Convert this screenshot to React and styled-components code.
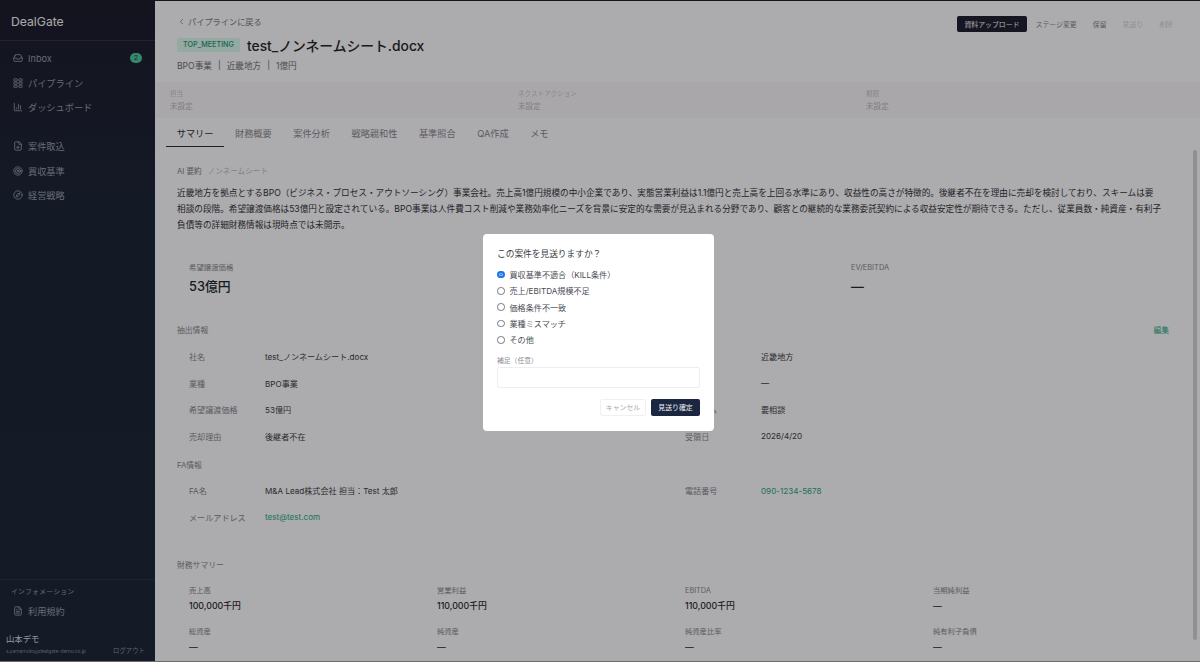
import React from 'react';
import styled, { createGlobalStyle } from 'styled-components';
import { Inbox, ChartColumn, FilePlus, Target, Compass, FileText, ChevronLeft } from 'lucide-react';

const GlobalStyle = createGlobalStyle`
  html, body { margin: 0; padding: 0; height: 100%; overflow: hidden; }
  body { font-family: Inter, "Noto Sans CJK JP", "Noto Sans", sans-serif; color: #2e2e34; }
  * { box-sizing: border-box; }
`;

const Frame = styled.div`
  position: relative;
  display: flex;
  height: 662px;
  overflow: hidden;
  background: #f7f5f8;
`;

const Sidebar = styled.aside`
  width: 155px;
  flex-shrink: 0;
  display: flex;
  flex-direction: column;
  background: linear-gradient(180deg, #1c1d2c 0%, #1e2537 30%, #1f2638 100%);
  color: #969aa8;
`;

const Logo = styled.div`
  height: 41px;
  padding: 14px 11px 0;
  font-size: 12.2px;
  line-height: 16px;
  color: #f4f4f6;
  border-bottom: 1px solid #2d3445;
`;

const NavGroup = styled.nav`
  display: flex;
  flex-direction: column;
  padding: 5px 0 0;
  margin-bottom: 9.5px;
`;

const NavItem = styled.div`
  height: 24.5px;
  display: flex;
  align-items: center;
  gap: 5px;
  padding: 0 13px;
  font-size: 9.2px;
  svg { flex-shrink: 0; }
`;

const Badge = styled.span`
  margin-left: auto;
  width: 12px;
  height: 10px;
  border-radius: 5px;
  background: #4cc39a;
  color: #17382c;
  font-size: 6.5px;
  line-height: 10px;
  text-align: center;
`;

const SideFooter = styled.div`
  margin-top: auto;
  border-top: 1px solid #2d3445;
`;

const InfoLabel = styled.div`
  padding: 7px 11px 0;
  font-size: 6.8px;
  line-height: 10px;
  letter-spacing: 0.3px;
  color: #9397a6;
`;

const TermsItem = styled(NavItem)`
  height: 20px;
  margin-top: 4px;
`;

const Account = styled.div`
  padding: 12px 10px 5px 6px;
`;

const AccountName = styled.div`
  font-size: 8.4px;
  line-height: 12px;
  color: #d6d8df;
`;

const AccountRow = styled.div`
  display: flex;
  justify-content: space-between;
  align-items: center;
  font-size: 6.4px;
  line-height: 12px;
  color: #8b8f9e;
`;

const MaskedMail = styled.span`
  font-size: 5.2px;
  letter-spacing: -0.2px;
  color: #7d8292;
  filter: blur(0.4px);
`;

const Main = styled.main`
  position: relative;
  flex: 1;
  min-width: 0;
  overflow: hidden;
`;

const Header = styled.header`
  height: 82px;
  padding: 15px 19px 0 22px;
  display: flex;
  justify-content: space-between;
  align-items: flex-start;
  background: #ffffff0a;
`;

const BackLink = styled.div`
  display: flex;
  align-items: center;
  gap: 2px;
  height: 12px;
  font-size: 8.2px;
  color: #77767e;
`;

const TitleRow = styled.div`
  display: flex;
  align-items: center;
  gap: 7px;
  height: 24px;
  margin-top: 6px;
`;

const Stage = styled.span`
  height: 14px;
  width: 63px;
  border-radius: 2px;
  background: #d3f3e8;
  color: #2f8f74;
  font-size: 7.2px;
  font-weight: 500;
  line-height: 14px;
  text-align: center;
`;

const Title = styled.h1`
  margin: 0;
  font-size: 13.8px;
  font-weight: 500;
  color: #26262c;
`;

const SubLine = styled.div`
  display: flex;
  align-items: center;
  gap: 6px;
  height: 12px;
  margin-top: 2px;
  font-size: 8.6px;
  color: #6f6e76;
`;

const Actions = styled.div`
  display: flex;
  align-items: center;
  margin-top: 1px;
`;

const ActionButton = styled.button`
  height: 16px;
  padding: 0 ${p => (p.$primary ? '7px' : '8px')};
  margin: 0 ${p => (p.$primary ? '1px' : '0')} 0 0;
  border: 0;
  border-radius: 2px;
  font-family: inherit;
  font-size: 6.9px;
  background: ${p => (p.$primary ? '#1f2030' : 'transparent')};
  color: ${p => (p.$primary ? '#f4f4f6' : p.$muted ? '#cfcdd2' : '#85848b')};
  filter: ${p => (p.$muted ? 'blur(0.4px)' : 'none')};
`;

const Strip = styled.section`
  display: grid;
  grid-template-columns: repeat(3, 348px);
  height: 36px;
  padding: 7px 15px 0;
  background: #f2f0f3;
`;

const StripLabel = styled.div`
  font-size: 6.6px;
  line-height: 10px;
  color: #c2c0c5;
  filter: blur(0.3px);
`;

const StripValue = styled.div`
  margin-top: 3px;
  font-size: 7.6px;
  line-height: 10px;
  color: #b4b2b8;
  filter: blur(0.3px);
`;

const Tabs = styled.div`
  display: flex;
  height: 29px;
  padding-left: 11px;
`;

const Tab = styled.div`
  padding: 0 10.75px;
  font-size: 9.2px;
  line-height: 31px;
  color: ${p => (p.$active ? '#2e2e34' : '#85848c')};
  border-bottom: ${p => (p.$active ? '1.5px solid #2e2e34' : '0')};
`;

const Content = styled.div`
  padding: 19px 31px 0 22px;
`;

const SummaryHead = styled.div`
  display: flex;
  gap: 6px;
  height: 12px;
  font-size: 7.6px;
  line-height: 12px;
  color: #7b7a82;
`;

const SummaryHint = styled.span`
  color: #bbb9c0;
`;

const SummaryText = styled.p`
  margin: 7px 0 0;
  font-size: 8.65px;
  line-height: 16px;
  white-space: nowrap;
  color: #33333a;
`;

const Metrics = styled.div`
  display: grid;
  grid-template-columns: repeat(3, 331px);
  margin-top: 29px;
  padding-left: 12px;
`;

const MetricLabel = styled.div`
  height: 12px;
  font-size: 7.4px;
  line-height: 12px;
  color: #85848c;
`;

const MetricValue = styled.div`
  height: 20px;
  margin-top: 3px;
  font-size: 12.8px;
  line-height: 20px;
  font-weight: 500;
  color: #26262c;
`;

const SectionHead = styled.div`
  display: flex;
  justify-content: space-between;
  height: 12px;
  margin-top: ${p => p.$top}px;
  font-size: 7.8px;
  line-height: 12px;
  color: #85848c;
`;

const EditLink = styled.span`
  color: #2aa67e;
`;

const InfoGrid = styled.div`
  display: grid;
  grid-template-columns: 496px 1fr;
  margin-top: ${p => p.$top}px;
  padding-left: 12px;
`;

const InfoRow = styled.div`
  display: grid;
  grid-template-columns: 76px 1fr;
  align-items: center;
  height: 26.4px;
  font-size: 8.1px;
`;

const InfoKey = styled.span`
  color: #85848c;
`;

const InfoValue = styled.span`
  color: ${p => (p.$link ? '#2aa67e' : '#3d3d44')};
`;

const FinanceGrid = styled.div`
  display: grid;
  grid-template-columns: repeat(4, 248px);
  row-gap: 14px;
  margin-top: 14px;
  padding-left: 12px;
`;

const FinanceLabel = styled.div`
  height: 12px;
  font-size: 7.3px;
  line-height: 12px;
  color: #85848c;
`;

const FinanceValue = styled.div`
  height: 13px;
  margin-top: 2px;
  font-size: 8.8px;
  line-height: 13px;
  font-weight: 500;
  color: #2a2a30;
`;

const ScrollThumb = styled.div`
  position: absolute;
  top: 150px;
  right: 3px;
  width: 4px;
  height: 490px;
  border-radius: 2px;
  background: #cfcdd1;
`;

const Overlay = styled.div`
  position: absolute;
  inset: 0;
  display: flex;
  align-items: center;
  justify-content: center;
  padding: 2px 3px 0 0;
  background: rgba(0, 0, 0, 0.3);
  border-top: 1.5px solid #14141c;
  border-bottom: 1px solid #6c6b70;
`;

const Modal = styled.form`
  width: 231px;
  height: 197px;
  padding: 14px 14px 0;
  border-radius: 4px;
  background: #fff;
`;

const ModalTitle = styled.div`
  font-size: 8.7px;
  line-height: 12px;
  color: #3a3a42;
`;

const RadioList = styled.div`
  display: flex;
  flex-direction: column;
  margin-top: 7px;
`;

const RadioRow = styled.label`
  display: flex;
  align-items: center;
  gap: 5px;
  height: 16.3px;
  font-size: 8.1px;
  color: #4a4a52;
`;

const RadioDot = styled.span`
  width: 7.5px;
  height: 7.5px;
  border-radius: 50%;
  flex-shrink: 0;
  border: ${p => (p.$checked ? '2px solid #1a73e8' : '0.8px solid #77777f')};
  background: ${p => (p.$checked ? '#1a73e8' : '#fff')};
  box-shadow: ${p => (p.$checked ? 'inset 0 0 0 0.6px #fff' : 'none')};
`;

const NoteLabel = styled.div`
  margin-top: 8px;
  font-size: 6.8px;
  line-height: 10px;
  color: #8c8c94;
`;

const NoteInput = styled.div`
  width: 203px;
  height: 21px;
  margin-top: 1px;
  border: 1px solid #eeeef1;
  border-radius: 2px;
`;

const ModalActions = styled.div`
  display: flex;
  justify-content: flex-end;
  gap: 5px;
  margin-top: 11px;
`;

const ModalButton = styled.button`
  width: ${p => (p.$primary ? '49px' : '46px')};
  height: 17px;
  padding: 0;
  border: ${p => (p.$primary ? '0' : '1px solid #f0f0f3')};
  border-radius: 2px;
  font-family: inherit;
  font-size: 6.9px;
  background: ${p => (p.$primary ? '#1b2740' : '#fff')};
  color: ${p => (p.$primary ? '#eef0f4' : '#a8a8b0')};
`;

const PipelineIcon = () => (
  <svg width="10" height="10" viewBox="0 0 12 12" fill="none" stroke="currentColor" strokeWidth="1">
    <rect x="1" y="1" width="4" height="2.6" rx="0.5" />
    <rect x="7" y="1" width="4" height="2.6" rx="0.5" />
    <rect x="1" y="4.8" width="4" height="2.6" rx="0.5" />
    <rect x="7" y="4.8" width="4" height="2.6" rx="0.5" />
    <rect x="1" y="8.6" width="4" height="2.6" rx="0.5" />
    <rect x="7" y="8.6" width="4" height="2.6" rx="0.5" />
  </svg>
);

const mainNav = [
  { icon: <Inbox size={10} />, label: 'Inbox', badge: '2' },
  { icon: <PipelineIcon />, label: 'パイプライン' },
  { icon: <ChartColumn size={10} />, label: 'ダッシュボード' },
];

const toolNav = [
  { icon: <FilePlus size={10} />, label: '案件取込' },
  { icon: <Target size={10} />, label: '買収基準' },
  { icon: <Compass size={10} />, label: '経営戦略' },
];

const tabs = ['サマリー', '財務概要', '案件分析', '戦略親和性', '基準照合', 'QA作成', 'メモ'];

const extracted = [
  ['社名', 'test_ノンネームシート.docx'],
  ['所在地', '近畿地方'],
  ['業種', 'BPO事業'],
  ['設立年', '—'],
  ['希望譲渡価格', '53億円'],
  ['スキーム', '要相談'],
  ['売却理由', '後継者不在'],
  ['受領日', '2026/4/20'],
];

const finance = [
  ['売上高', '100,000千円'],
  ['営業利益', '110,000千円'],
  ['EBITDA', '110,000千円'],
  ['当期純利益', '—'],
  ['総資産', '—'],
  ['純資産', '—'],
  ['純資産比率', '—'],
  ['純有利子負債', '—'],
];

const reasons = ['買収基準不適合（KILL条件）', '売上/EBITDA規模不足', '価格条件不一致', '業種ミスマッチ', 'その他'];

export default function App() {
  return (
    <Frame>
      <GlobalStyle />
      <Sidebar>
        <Logo>DealGate</Logo>
        <NavGroup>
          {mainNav.map(item => (
            <NavItem key={item.label}>
              {item.icon}
              {item.label}
              {item.badge && <Badge>{item.badge}</Badge>}
            </NavItem>
          ))}
        </NavGroup>
        <NavGroup>
          {toolNav.map(item => (
            <NavItem key={item.label}>
              {item.icon}
              {item.label}
            </NavItem>
          ))}
        </NavGroup>
        <SideFooter>
          <InfoLabel>インフォメーション</InfoLabel>
          <TermsItem>
            <FileText size={10} />
            利用規約
          </TermsItem>
          <Account>
            <AccountName>山本デモ</AccountName>
            <AccountRow>
              <MaskedMail>s.yamamoto@dealgate-demo.co.jp</MaskedMail>
              ログアウト
            </AccountRow>
          </Account>
        </SideFooter>
      </Sidebar>

      <Main>
        <Header>
          <div>
            <BackLink>
              <ChevronLeft size={9} />
              パイプラインに戻る
            </BackLink>
            <TitleRow>
              <Stage>TOP_MEETING</Stage>
              <Title>test_ノンネームシート.docx</Title>
            </TitleRow>
            <SubLine>
              <span>BPO事業</span>|<span>近畿地方</span>|<span>1億円</span>
            </SubLine>
          </div>
          <Actions>
            <ActionButton $primary>資料アップロード</ActionButton>
            <ActionButton>ステージ変更</ActionButton>
            <ActionButton>保留</ActionButton>
            <ActionButton $muted>見送り</ActionButton>
            <ActionButton $muted>削除</ActionButton>
          </Actions>
        </Header>

        <Strip>
          <div>
            <StripLabel>担当</StripLabel>
            <StripValue>未設定</StripValue>
          </div>
          <div>
            <StripLabel>ネクストアクション</StripLabel>
            <StripValue>未設定</StripValue>
          </div>
          <div>
            <StripLabel>期限</StripLabel>
            <StripValue>未設定</StripValue>
          </div>
        </Strip>

        <Tabs>
          {tabs.map((tab, i) => (
            <Tab key={tab} $active={i === 0}>{tab}</Tab>
          ))}
        </Tabs>

        <Content>
          <SummaryHead>
            AI 要約 <SummaryHint>ノンネームシート</SummaryHint>
          </SummaryHead>
          <SummaryText>
            近畿地方を拠点とするBPO（ビジネス・プロセス・アウトソーシング）事業会社。売上高1億円規模の中小企業であり、実態営業利益は1.1億円と売上高を上回る水準にあり、収益性の高さが特徴的。後継者不在を理由に売却を検討しており、スキームは要
            <br />
            相談の段階。希望譲渡価格は53億円と設定されている。BPO事業は人件費コスト削減や業務効率化ニーズを背景に安定的な需要が見込まれる分野であり、顧客との継続的な業務委託契約による収益安定性が期待できる。ただし、従業員数・純資産・有利子
            <br />
            負債等の詳細財務情報は現時点では未開示。
          </SummaryText>

          <Metrics>
            <div>
              <MetricLabel>希望譲渡価格</MetricLabel>
              <MetricValue>53億円</MetricValue>
            </div>
            <div>
              <MetricLabel>売上倍率</MetricLabel>
              <MetricValue>—</MetricValue>
            </div>
            <div>
              <MetricLabel>EV/EBITDA</MetricLabel>
              <MetricValue>—</MetricValue>
            </div>
          </Metrics>

          <SectionHead $top={27}>
            抽出情報
            <EditLink>編集</EditLink>
          </SectionHead>
          <InfoGrid $top={7.8}>
            {extracted.map(([key, value]) => (
              <InfoRow key={key}>
                <InfoKey>{key}</InfoKey>
                <InfoValue>{value}</InfoValue>
              </InfoRow>
            ))}
          </InfoGrid>

          <SectionHead $top={9.6}>FA情報</SectionHead>
          <InfoGrid $top={6.8}>
            <InfoRow>
              <InfoKey>FA名</InfoKey>
              <InfoValue>M&amp;A Lead株式会社 担当：Test 太郎</InfoValue>
            </InfoRow>
            <InfoRow>
              <InfoKey>電話番号</InfoKey>
              <InfoValue $link>090-1234-5678</InfoValue>
            </InfoRow>
            <InfoRow>
              <InfoKey>メールアドレス</InfoKey>
              <InfoValue $link>test@test.com</InfoValue>
            </InfoRow>
          </InfoGrid>

          <SectionHead $top={28.4}>財務サマリー</SectionHead>
          <FinanceGrid>
            {finance.map(([label, value]) => (
              <div key={label}>
                <FinanceLabel>{label}</FinanceLabel>
                <FinanceValue>{value}</FinanceValue>
              </div>
            ))}
          </FinanceGrid>
        </Content>
        <ScrollThumb />
      </Main>

      <Overlay>
        <Modal>
          <ModalTitle>この案件を見送りますか？</ModalTitle>
          <RadioList>
            {reasons.map((reason, i) => (
              <RadioRow key={reason}>
                <RadioDot $checked={i === 0} />
                {reason}
              </RadioRow>
            ))}
          </RadioList>
          <NoteLabel>補足（任意）</NoteLabel>
          <NoteInput />
          <ModalActions>
            <ModalButton type="button">キャンセル</ModalButton>
            <ModalButton type="button" $primary>見送り確定</ModalButton>
          </ModalActions>
        </Modal>
      </Overlay>
    </Frame>
  );
}
